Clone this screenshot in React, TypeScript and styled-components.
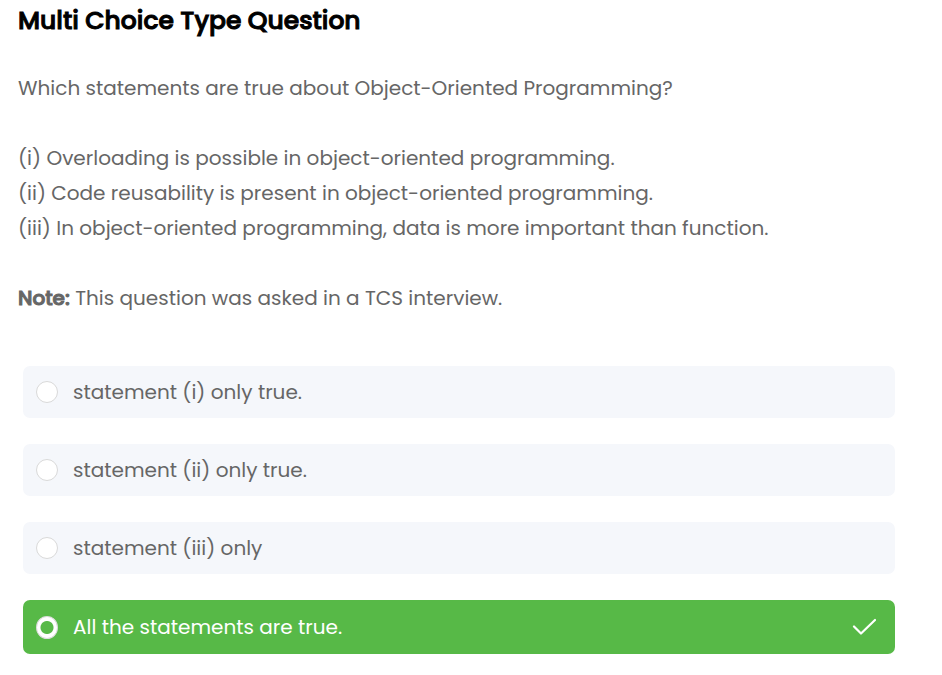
import React, { useState } from "react";
import styled, { createGlobalStyle } from "styled-components";

const GlobalStyle = createGlobalStyle`
  body {
    margin: 0;
    background: #ffffff;
    font-family: Poppins, Inter, "Open Sans", sans-serif;
  }
`;

const Page = styled.main`
  padding: 3px 18px 20px;
`;

const Title = styled.h1`
  margin: 0 0 32px;
  font-size: 25px;
  line-height: 36px;
  font-weight: 500;
  color: #000000;
  -webkit-text-stroke: 1px #000000;
`;

const Question = styled.section`
  display: grid;
  gap: 35px;
  color: #666666;
  font-size: 20px;
  line-height: 35px;
`;

const Paragraph = styled.p`
  margin: 0;
`;

const Strong = styled.strong`
  font-weight: 500;
  -webkit-text-stroke: 1px #666666;
`;

const Options = styled.fieldset`
  display: grid;
  gap: 26px;
  min-width: 0;
  margin: 50px 29px 0 5px;
  padding: 0;
  border: 0;
`;

const Option = styled.label<{ $chosen: boolean }>`
  display: flex;
  align-items: center;
  gap: 15px;
  padding: ${(p) => (p.$chosen ? "10px 19px 10px 13px" : "9px 19px 9px 13px")};
  border-radius: 7px;
  background: ${(p) => (p.$chosen ? "#57b947" : "#f5f7fb")};
  color: ${(p) => (p.$chosen ? "#ffffff" : "#666666")};
  font-size: 20px;
  line-height: 34px;
  cursor: pointer;
`;

const Radio = styled.input`
  appearance: none;
  flex: none;
  box-sizing: border-box;
  width: 22px;
  height: 22px;
  margin: 0;
  border: 1px solid #d9d9d9;
  border-radius: 50%;
  background: #ffffff;

  &:checked {
    height: 23px;
    border-color: #dddddd;
    background: radial-gradient(circle, #57b947 6px, #ffffff 7px);
  }
`;

const OptionText = styled.span`
  flex: 1;
`;

const Check = () => (
  <svg width="24" height="18" viewBox="0 0 24 18" fill="none" aria-hidden="true">
    <path d="M2 8.5 L9 15.5 L23 2" stroke="#ffffff" strokeWidth="2.2" strokeLinecap="round" strokeLinejoin="round" />
  </svg>
);

const choices = [
  "statement (i) only true.",
  "statement (ii) only true.",
  "statement (iii) only",
  "All the statements are true.",
];

export default function App() {
  const [selected, setSelected] = useState(3);

  return (
    <>
      <GlobalStyle />
      <Page>
        <Title>Multi Choice Type Question</Title>
        <Question>
          <Paragraph>Which statements are true about Object-Oriented Programming?</Paragraph>
          <Paragraph>
            (i) Overloading is possible in object-oriented programming.
            <br />
            (ii) Code reusability is present in object-oriented programming.
            <br />
            (iii) In object-oriented programming, data is more important than function.
          </Paragraph>
          <Paragraph>
            <Strong>Note:</Strong> This question was asked in a TCS interview.
          </Paragraph>
        </Question>
        <Options aria-label="Answers">
          {choices.map((choice, i) => (
            <Option key={choice} $chosen={i === selected}>
              <Radio type="radio" name="answer" checked={i === selected} onChange={() => setSelected(i)} />
              <OptionText>{choice}</OptionText>
              {i === selected && <Check />}
            </Option>
          ))}
        </Options>
      </Page>
    </>
  );
}
